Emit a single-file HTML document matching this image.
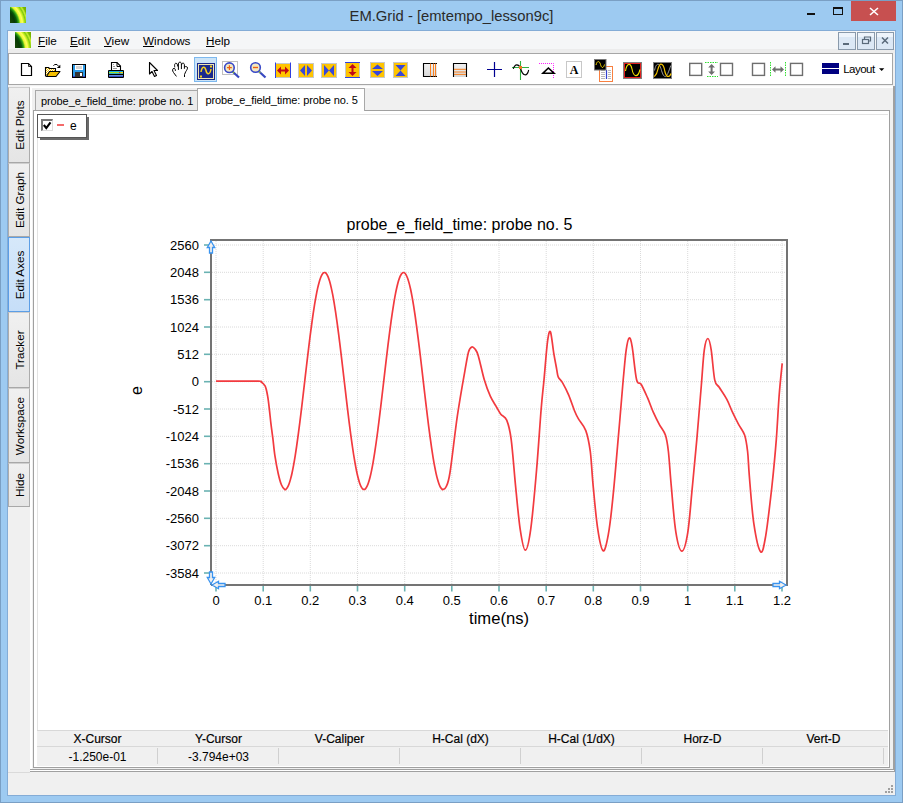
<!DOCTYPE html>
<html><head><meta charset="utf-8"><title>EM.Grid</title>
<style>
html,body{margin:0;padding:0;width:903px;height:803px;overflow:hidden;background:#9dcaf1;font-family:"Liberation Sans",sans-serif;}
.a{position:absolute;box-sizing:border-box;}
svg{position:absolute;left:0;top:0;overflow:visible;}
.g{stroke:#dadada;stroke-width:1;stroke-dasharray:1 1;fill:none;}
.t{stroke:#6ab2b2;stroke-width:1.6;fill:none;}
.f{stroke:#747474;stroke-width:2;fill:none;}
.w{stroke:#f23a3f;stroke-width:1.7;fill:none;stroke-linejoin:round;}
.lb{font-family:"Liberation Sans",sans-serif;font-size:13px;fill:#000;}
.tt{font-family:"Liberation Sans",sans-serif;font-size:16px;fill:#000;}
.m{fill:#f4f0ec;stroke:#3a94f0;stroke-width:1.3;}
.menu span{position:absolute;top:34px;font-size:11.7px;color:#000;}
.stab{position:absolute;left:8px;width:22px;background:linear-gradient(#f0f0f0,#e5e5e5);border:1px solid #acacac;border-top-color:#cfcfcf;border-bottom-color:#a8a8a8;box-sizing:border-box;}
.stab span{position:absolute;left:50%;top:50%;transform:translate(-50%,-50%) rotate(-90deg);font-size:11.7px;white-space:nowrap;color:#000;}
.hd{position:absolute;top:732px;font-size:12px;color:#000;text-align:center;width:121px;-webkit-text-stroke:0.2px #000;}
.vl{position:absolute;top:750px;font-size:12px;color:#000;text-align:center;width:121px;}
</style></head><body>
<!-- outer frame -->
<div class="a" style="left:0;top:0;width:903px;height:803px;border:1px solid #7a9fc4;"></div>
<!-- title icon -->
<div class="a" style="left:10px;top:7px;width:16px;height:16px;background:radial-gradient(circle at -13px 18px,#4a5a18 0px,#1a4a08 13px,#083a06 18px,#0a5a08 20px,#40b018 22px,#e8f830 23.5px,#ffff60 25.5px,#c8f020 27px,#80c810 28.5px,#c8f030 30px,#78b800 31.5px,#6a9a00 40px);"></div>
<div class="a" style="left:0;top:1px;width:903px;height:30px;text-align:center;font-size:14.8px;line-height:30px;color:#2a2a2a;">EM.Grid - [emtempo_lesson9c]</div>
<!-- title buttons -->
<div class="a" style="left:807px;top:13px;width:8px;height:2px;background:#111;"></div>
<div class="a" style="left:833px;top:7px;width:10px;height:8px;border:1px solid #111;border-top-width:2px;"></div>
<div class="a" style="left:851px;top:1px;width:45px;height:20px;background:#c75050;"></div>
<svg width="903" height="30" style="pointer-events:none"><path d="M870 8 L878 15 M878 8 L870 15" stroke="#fff" stroke-width="1.6"/></svg>

<!-- client area -->
<div class="a" style="left:7px;top:30px;width:889px;height:766px;border:1px solid #84acd6;"></div>
<div class="a" style="left:8px;top:31px;width:887px;height:764px;background:#f0f0f0;"></div>
<!-- menu bar -->
<div class="a" style="left:8px;top:31px;width:887px;height:18px;background:#f5f6f7;"></div>
<div class="a" style="left:15px;top:32px;width:16px;height:16px;background:radial-gradient(circle at -13px 18px,#4a5a18 0px,#1a4a08 13px,#083a06 18px,#0a5a08 20px,#40b018 22px,#e8f830 23.5px,#ffff60 25.5px,#c8f020 27px,#80c810 28.5px,#c8f030 30px,#78b800 31.5px,#6a9a00 40px);"></div>
<div class="menu">
<span style="left:38px"><u>F</u>ile</span>
<span style="left:70px"><u>E</u>dit</span>
<span style="left:104px"><u>V</u>iew</span>
<span style="left:143px"><u>W</u>indows</span>
<span style="left:206px"><u>H</u>elp</span>
</div>
<!-- band -->
<div class="a" style="left:8px;top:49px;width:887px;height:4px;background:#ececec;"></div>
<!-- mdi buttons -->
<div class="a" style="left:838px;top:32px;width:18px;height:18px;border:1px solid #8a9aab;background:linear-gradient(#eef4fb 0,#eef4fb 25%,#dce8f5 25%,#dce8f5 100%);"></div>
<div class="a" style="left:857px;top:32px;width:18px;height:18px;border:1px solid #8a9aab;background:linear-gradient(#eef4fb 0,#eef4fb 25%,#dce8f5 25%,#dce8f5 100%);"></div>
<div class="a" style="left:876px;top:32px;width:18px;height:18px;border:1px solid #8a9aab;background:linear-gradient(#eef4fb 0,#eef4fb 25%,#dce8f5 25%,#dce8f5 100%);"></div>
<svg width="903" height="60" style="pointer-events:none">
<rect x="843" y="43" width="6" height="2" fill="#5a6a7a"/>
<rect x="862.5" y="39.5" width="6" height="4" fill="none" stroke="#5a6a7a" stroke-width="1.2"/>
<path d="M864.5 39.5 V37 H870.5 V41 H868.5" fill="none" stroke="#5a6a7a" stroke-width="1.2"/>
<path d="M882 37.5 L888 43.5 M888 37.5 L882 43.5" stroke="#5a6a7a" stroke-width="1.5"/>
</svg>

<!-- toolbar -->
<div class="a" style="left:8px;top:53px;width:885px;height:32px;background:#fff;border:1px solid #a6a6a6;"></div>
<svg width="903" height="90" style="pointer-events:none">
<!-- new doc -->
<path d="M21.5 63.5 H28.5 L31.5 66.5 V75.5 H21.5 Z" fill="#fff" stroke="#000" stroke-width="1.2"/>
<path d="M28.5 63.5 V66.5 H31.5" fill="none" stroke="#000" stroke-width="0.8"/>
<!-- open folder -->
<defs><pattern id="chk" x="0" y="0" width="2" height="2" patternUnits="userSpaceOnUse"><rect width="2" height="2" fill="#fff"/><rect width="1" height="1" fill="#f5c000"/><rect x="1" y="1" width="1" height="1" fill="#f5c000"/></pattern></defs>
<path d="M46 68 H49 L50 69 H55 V72 H49 L47 76 H46 Z" fill="url(#chk)"/>
<path d="M45.5 76.5 V67.5 H48.5 L49.5 68.5 H55.5 V71.5 H59.5" stroke="#000" stroke-width="1.1" fill="none"/>
<path d="M49.5 71.5 H60 L56 76.5 H46.5 Z" fill="#f5c000" stroke="#000" stroke-width="1.1" stroke-linejoin="round"/>
<path d="M53.5 65.8 L54.6 64.5 H57 L58.5 66.2" stroke="#000" stroke-width="1" fill="none"/>
<path d="M56.8 67.9 L60.3 67.9 L60.3 64.8 Z" fill="#000"/>
<!-- save -->
<rect x="72" y="64" width="14" height="14" fill="#000"/>
<rect x="73" y="65" width="12" height="12" fill="#2a9ae8"/>
<rect x="73" y="76" width="12" height="1" fill="#3a3ad0"/>
<rect x="75" y="65" width="8" height="5" fill="#fff"/>
<rect x="76" y="66" width="6" height="3" fill="#d4d4d4"/>
<rect x="75" y="72" width="8" height="5" fill="#333"/>
<rect x="80" y="73" width="2" height="3" fill="#fff"/>
<!-- printer -->
<defs><linearGradient id="pb" x1="0" y1="0" x2="0" y2="1"><stop offset="0" stop-color="#78a8ec"/><stop offset="1" stop-color="#2030b0"/></linearGradient></defs>
<path d="M111.5 62.5 H117 L120.5 66 V70.5 H111.5 Z" fill="#fff" stroke="#000" stroke-width="1.1"/>
<path d="M117 62.5 V66.5 H120.5" fill="none" stroke="#000" stroke-width="1"/>
<rect x="113" y="64" width="1" height="1" fill="#999"/>
<rect x="113" y="66" width="2" height="1" fill="#999"/>
<rect x="113" y="68" width="4" height="1" fill="#999"/>
<rect x="108" y="70" width="16" height="8" rx="1" fill="#000"/>
<rect x="109" y="71" width="14" height="3" fill="#10a8ec"/>
<rect x="109" y="72" width="14" height="1.2" fill="#a8e020"/>
<rect x="119" y="72" width="1.5" height="1.2" fill="#f02030"/>
<rect x="120.5" y="72" width="2.5" height="1.2" fill="#f8d800"/>
<rect x="109" y="75" width="14" height="2" fill="url(#pb)"/>
<!-- pointer -->
<path d="M149.5 62.5 V74 L152 71.5 L154.5 76.5 L156.5 75.5 L154 70.5 H157.5 Z" fill="#fff" stroke="#000" stroke-width="1.1" stroke-linejoin="round"/>
<!-- hand -->
<g fill="none" stroke="#000" stroke-width="1" stroke-linecap="round">
<path d="M176.2 76.1 L173.5 72.5 C172 70.5 172.4 68.4 174 68.4 C175 68.4 175.4 69.2 175.4 70.5"/>
<path d="M174.7 67 C174.2 64 175 63.3 176 63.3 C177.3 63.3 177.5 64.5 177.5 66"/>
<path d="M178.4 69.5 V64 C178.4 62.6 179.2 62.2 180 62.2 C180.9 62.2 181.4 63 181.4 64 V68.7"/>
<path d="M181.6 64.5 C181.6 63.5 182.3 63.2 183 63.2 C183.9 63.2 184.4 63.8 184.4 64.8 V68.4"/>
<path d="M184.6 66.8 C185.5 66.3 187.5 66.3 187.5 68 C187.5 69 186.5 70.5 185.8 71.5 L184.5 74.5 V76.6"/>
</g>
<!-- selected waveform button -->
<rect x="194.5" y="57.5" width="22" height="24" fill="#cce4f7" stroke="#7db8ee" stroke-width="1"/>
<rect x="197" y="63" width="18" height="17" fill="#1a2a8e"/>
<rect x="198.5" y="64.5" width="15" height="14" fill="none" stroke="#f0e6b0" stroke-width="1"/>
<path d="M201 72 C202 66 205 66 206 70.5 C207 75 210 75 211 69" fill="none" stroke="#f5d020" stroke-width="1.5"/>
<rect x="210" y="65.5" width="2" height="2" fill="#f5d020"/>
<rect x="200" y="75.5" width="2" height="2" fill="#f5d020"/>
<!-- zoom in -->
<rect x="222.5" y="61.5" width="15" height="13" fill="none" stroke="#c0c0c0" stroke-width="1"/>
<path d="M232.5 71.5 L239 77.5" stroke="#3848c0" stroke-width="2.2"/>
<path d="M232.5 71.5 L234 73" stroke="#90c030" stroke-width="1.5"/>
<circle cx="229.4" cy="67.7" r="4.8" fill="#f2e8c0" stroke="#3848c8" stroke-width="1.6"/>
<path d="M227 67.7 H231.8 M229.4 65.3 V70.1" stroke="#f06010" stroke-width="1.2"/>
<!-- zoom out -->
<path d="M258.8 71.3 L265.5 77.5" stroke="#3848c0" stroke-width="2.2"/>
<path d="M258.8 71.3 L260.3 72.8" stroke="#90c030" stroke-width="1.5"/>
<circle cx="255.5" cy="67.5" r="4.8" fill="#f2e8c0" stroke="#3848c8" stroke-width="1.6"/>
<path d="M253 67.5 H258" stroke="#f06010" stroke-width="1.4"/>
<!-- A: red horiz arrows -->
<rect x="275" y="63" width="16" height="15" fill="#ffc400"/>
<path d="M275.5 63.5 H290.5 M275.5 77.5 H290.5" stroke="#c8c8c8" stroke-width="1"/>
<path d="M275.5 62.5 V78 M290.5 62.5 V78" stroke="#3040e0" stroke-width="1"/>
<path d="M277 70.5 L281 66.5 V69.5 H285 V66.5 L289 70.5 L285 74.5 V71.5 H281 V74.5 Z" fill="#c00818"/>
<!-- B -->
<rect x="298.5" y="63.5" width="15" height="14" fill="#ffc400" stroke="#c8c8c8" stroke-width="1"/>
<path d="M300 70.5 L305 65 V76 Z M312 70.5 L307 65 V76 Z" fill="#3848d8"/>
<!-- C -->
<rect x="321.5" y="63.5" width="15" height="14" fill="#ffc400" stroke="#c8c8c8" stroke-width="1"/>
<path d="M324 65 L329 70.5 L324 76 Z M334 65 L329 70.5 L334 76 Z" fill="#3848d8"/>
<!-- D: red vert arrows -->
<rect x="345" y="62" width="15" height="16" fill="#ffc400"/>
<path d="M345.5 62.5 V77.5 M359.5 62.5 V77.5" stroke="#c8c8c8" stroke-width="1"/>
<path d="M345 62.5 H360 M345 77.5 H360" stroke="#3040e0" stroke-width="1"/>
<path d="M352.5 64 L356.5 68 H353.5 V72 H356.5 L352.5 76 L348.5 72 H351.5 V68 H348.5 Z" fill="#c00818"/>
<!-- E -->
<rect x="370.5" y="62.5" width="14" height="15" fill="#ffc400" stroke="#c8c8c8" stroke-width="1"/>
<path d="M377.5 64.5 L383 69 H372 Z M377.5 76 L383 71 H372 Z" fill="#3848d8"/>
<!-- F -->
<rect x="393.5" y="62.5" width="14" height="15" fill="#ffc400" stroke="#c8c8c8" stroke-width="1"/>
<path d="M395.5 65 H405.5 L400.5 70.5 Z M395.5 76 H405.5 L400.5 70.5 Z" fill="#3848d8"/>
<!-- vertical bars -->
<defs><linearGradient id="gg" x1="0" y1="0" x2="0" y2="1"><stop offset="0" stop-color="#f2f2f2"/><stop offset="0.5" stop-color="#e6e6e6"/><stop offset="1" stop-color="#d6d6d6"/></linearGradient></defs>
<rect x="423" y="63" width="14" height="14" fill="url(#gg)"/>
<path d="M437 63.5 H423.5 V76.5 H437" fill="none" stroke="#000" stroke-width="1.1"/>
<path d="M430.5 63.5 V76.5 M433.5 63.5 V76.5 M435.5 63.5 V76.5" stroke="#f88020" stroke-width="1"/>
<!-- horizontal bars -->
<rect x="453" y="63" width="14" height="14" fill="url(#gg)"/>
<path d="M453.5 77 V63.5 H466.5 V77" fill="none" stroke="#000" stroke-width="1.1"/>
<path d="M454 69.3 H466 M454 72 H466 M454 74.4 H466" stroke="#f88020" stroke-width="1"/>
<!-- plus -->
<path d="M487 69.5 H502 M494.5 62 V77" stroke="#000090" stroke-width="1.2"/>
<!-- sine cursor -->
<path d="M520.5 61 V80 M512 67.5 H529" stroke="#30b040" stroke-width="1.1"/>
<path d="M513.3 68.8 C515 63.5 518.5 63.8 520.5 68 C522.5 76.5 527 77 528.7 70" fill="none" stroke="#000" stroke-width="1.1"/>
<rect x="519" y="66" width="3" height="3" fill="#f07820"/>
<!-- triangle magenta -->
<path d="M539 63.5 H553.5 V78" fill="none" stroke="#ff20ff" stroke-width="1" stroke-dasharray="1 1"/>
<path d="M543 73.2 L548.4 68 L554 73.2 Z" fill="none" stroke="#000" stroke-width="1.6"/>
<!-- A box -->
<rect x="566.5" y="61.5" width="15" height="16" fill="#fff" stroke="#c8c8c8" stroke-width="1"/>
<text x="574" y="74" text-anchor="middle" font-family="Liberation Serif" font-weight="bold" font-size="12" fill="#000">A</text>
<!-- overlay -->
<rect x="599.5" y="66.5" width="13" height="15" fill="#fff" stroke="#f88040" stroke-width="1"/>
<path d="M601 70.5 H605 M601 72.5 H605 M601 74.5 H605 M601 76.5 H605 M601 78.5 H605 M608 70.5 H611 M608 72.5 H611 M608 74.5 H611 M608 76.5 H611 M608 78.5 H611" stroke="#b8b8b8" stroke-width="1"/>
<path d="M606.5 70 V79" stroke="#3040d0" stroke-width="1.2"/>
<rect x="594.5" y="59.5" width="11.5" height="10.5" fill="#000" stroke="#777" stroke-width="1"/>
<path d="M596 65 C597 60.5 599.5 60.5 600.5 64.5 C601.5 68.5 603.5 68.5 604.5 64.5" fill="none" stroke="#f0d000" stroke-width="1"/>
<!-- red sine -->
<rect x="623.5" y="62.5" width="18" height="16" fill="#000" stroke="#808080" stroke-width="1"/>
<rect x="624.5" y="63.5" width="16" height="14" fill="none" stroke="#e02020" stroke-width="1"/>
<path d="M625.5 71 C627 62.5 630.5 62.5 632 69 C633.5 77.5 638 78 640 69.5" fill="none" stroke="#f0e000" stroke-width="1.1"/>
<!-- double sine -->
<rect x="653.5" y="62.5" width="18" height="16" fill="#000" stroke="#808080" stroke-width="1"/>
<path d="M654.5 70.5 C655.5 66 656.5 64.3 658 64.3 C660 64.3 661 69 662 72 C663 75 664 76.5 665.2 76.5 C667 76.5 668.5 72 670.8 65.5" fill="none" stroke="#9a9a9a" stroke-width="1"/>
<path d="M654.3 76.6 C656 75 657.3 73 658 69 C659 65.5 660 64.2 661 64.2 C662.5 64.2 664 66 665 72 C666 75.5 667 76.5 668 76.5 C669.5 76.5 670.5 75 671 73.5" fill="none" stroke="#f5c400" stroke-width="1.2"/>
<!-- squares and arrows -->
<g fill="none" stroke="#6e6e6e" stroke-width="1.4">
<rect x="689.7" y="63.4" width="12" height="12"/>
<rect x="720.5" y="63.4" width="12" height="12"/>
<rect x="752.5" y="63.4" width="12" height="12"/>
<rect x="790.5" y="63.4" width="12" height="12"/>
</g>
<path d="M705 62.5 H718 M707 76.5 H718" stroke="#30e030" stroke-width="1" stroke-dasharray="1.5 1"/>
<path d="M711.6 64 L715 67.5 H712.6 V71.5 H715 L711.6 75 L708.2 71.5 H710.6 V67.5 H708.2 Z" fill="#6e6e6e"/>
<path d="M770.5 62 V76 M785.5 62 V76" stroke="#30e030" stroke-width="1" stroke-dasharray="1.5 1"/>
<path d="M772 69.5 L775.5 66.2 V68.5 H780.5 V66.2 L784 69.5 L780.5 72.8 V70.5 H775.5 V72.8 Z" fill="#6e6e6e"/>
<!-- layout -->
<rect x="822" y="63" width="17" height="5" fill="#000080"/>
<rect x="822" y="69" width="17" height="5" fill="#000080"/>
<text x="843.2" y="72.7" font-family="Liberation Sans" font-size="11.5" letter-spacing="-0.5" fill="#000">Layout</text>
<path d="M879 68.3 H884.3 L881.65 71 Z" fill="#000"/>
</svg>


<!-- mdi client -->
<div class="a" style="left:30px;top:86px;width:865px;height:686px;background:#fff;border-right:1px solid #a0a0a0;border-bottom:1px solid #a0a0a0;"></div>
<div class="a" style="left:30px;top:86px;width:864px;height:684px;border-right:1px solid #a0a0a0;border-bottom:1px solid #a0a0a0;"></div>
<div class="a" style="left:32px;top:88px;width:861px;height:681px;background:#f0f0f0;"></div>
<div class="a" style="left:30px;top:769px;width:863px;height:1px;background:#a0a0a0;"></div>
<div class="a" style="left:30px;top:86px;width:863px;height:1px;background:#fcfcfc;"></div>

<!-- side tabs -->
<div class="stab" style="top:87px;height:76px;"><span>Edit Plots</span></div>
<div class="stab" style="top:163px;height:74px;"><span>Edit Graph</span></div>
<div class="stab" style="top:237px;height:75px;background:linear-gradient(#d6e8fa,#c6def8);border-color:#5c9ee6;"><span>Edit Axes</span></div>
<div class="stab" style="top:312px;height:76px;"><span>Tracker</span></div>
<div class="stab" style="top:388px;height:75px;"><span>Workspace</span></div>
<div class="stab" style="top:463px;height:44px;"><span>Hide</span></div>

<!-- doc tabs -->
<div class="a" style="left:33px;top:110px;width:857px;height:658px;background:#fff;border:1px solid #a0a0a0;"></div>
<div class="a" style="left:37px;top:114px;width:851px;height:651px;border-top:1px solid #e3e3e3;border-left:1px solid #e3e3e3;"></div>
<div class="a" style="left:35px;top:90px;width:163px;height:20px;background:#ebebeb;border:1px solid #a8a8a8;border-bottom:none;"></div>
<div class="a" style="left:41px;top:95px;font-size:11px;letter-spacing:-0.1px;color:#000;white-space:nowrap;">probe_e_field_time: probe no. 1</div>
<div class="a" style="left:197px;top:88px;width:168px;height:23px;background:#fff;border:1px solid #a8a8a8;border-bottom:none;"></div>
<div class="a" style="left:205.5px;top:93.5px;font-size:11px;letter-spacing:-0.1px;color:#000;white-space:nowrap;">probe_e_field_time: probe no. 5</div>

<!-- legend -->
<div class="a" style="left:40px;top:117px;width:49px;height:23px;background:#6a6a6a;"></div>
<div class="a" style="left:37px;top:114px;width:50px;height:24px;background:#fff;border:1px solid #555;"></div>
<div class="a" style="left:41px;top:119px;width:12px;height:12px;background:#fff;border:2px solid #777;border-right:1px solid #ddd;border-bottom:1px solid #ddd;"></div>
<svg width="903" height="200" style="pointer-events:none"><path d="M43.8 125 L46.3 128 L50.5 122.3" stroke="#000" stroke-width="2.1" fill="none"/></svg>
<div class="a" style="left:57px;top:124px;width:7px;height:2px;background:#f46a6a;"></div>
<div class="a" style="left:70px;top:119px;font-size:12px;color:#000;">e</div>

<!-- chart -->
<svg width="903" height="803" style="pointer-events:none">
<line x1="216.0" y1="241" x2="216.0" y2="585" class="g"/>
<line x1="263.2" y1="241" x2="263.2" y2="585" class="g"/>
<line x1="310.3" y1="241" x2="310.3" y2="585" class="g"/>
<line x1="357.5" y1="241" x2="357.5" y2="585" class="g"/>
<line x1="404.7" y1="241" x2="404.7" y2="585" class="g"/>
<line x1="451.8" y1="241" x2="451.8" y2="585" class="g"/>
<line x1="499.0" y1="241" x2="499.0" y2="585" class="g"/>
<line x1="546.2" y1="241" x2="546.2" y2="585" class="g"/>
<line x1="593.3" y1="241" x2="593.3" y2="585" class="g"/>
<line x1="640.5" y1="241" x2="640.5" y2="585" class="g"/>
<line x1="687.7" y1="241" x2="687.7" y2="585" class="g"/>
<line x1="734.8" y1="241" x2="734.8" y2="585" class="g"/>
<line x1="782.0" y1="241" x2="782.0" y2="585" class="g"/>
<line x1="212" y1="245.0" x2="787" y2="245.0" class="g"/>
<line x1="212" y1="272.3" x2="787" y2="272.3" class="g"/>
<line x1="212" y1="299.7" x2="787" y2="299.7" class="g"/>
<line x1="212" y1="327.0" x2="787" y2="327.0" class="g"/>
<line x1="212" y1="354.3" x2="787" y2="354.3" class="g"/>
<line x1="212" y1="381.7" x2="787" y2="381.7" class="g"/>
<line x1="212" y1="409.0" x2="787" y2="409.0" class="g"/>
<line x1="212" y1="436.3" x2="787" y2="436.3" class="g"/>
<line x1="212" y1="463.7" x2="787" y2="463.7" class="g"/>
<line x1="212" y1="491.0" x2="787" y2="491.0" class="g"/>
<line x1="212" y1="518.3" x2="787" y2="518.3" class="g"/>
<line x1="212" y1="545.7" x2="787" y2="545.7" class="g"/>
<line x1="212" y1="573.0" x2="787" y2="573.0" class="g"/>
<line x1="216.0" y1="586" x2="216.0" y2="591.5" class="t"/>
<line x1="263.2" y1="586" x2="263.2" y2="591.5" class="t"/>
<line x1="310.3" y1="586" x2="310.3" y2="591.5" class="t"/>
<line x1="357.5" y1="586" x2="357.5" y2="591.5" class="t"/>
<line x1="404.7" y1="586" x2="404.7" y2="591.5" class="t"/>
<line x1="451.8" y1="586" x2="451.8" y2="591.5" class="t"/>
<line x1="499.0" y1="586" x2="499.0" y2="591.5" class="t"/>
<line x1="546.2" y1="586" x2="546.2" y2="591.5" class="t"/>
<line x1="593.3" y1="586" x2="593.3" y2="591.5" class="t"/>
<line x1="640.5" y1="586" x2="640.5" y2="591.5" class="t"/>
<line x1="687.7" y1="586" x2="687.7" y2="591.5" class="t"/>
<line x1="734.8" y1="586" x2="734.8" y2="591.5" class="t"/>
<line x1="782.0" y1="586" x2="782.0" y2="591.5" class="t"/>
<line x1="204" y1="245.0" x2="210" y2="245.0" class="t"/>
<line x1="204" y1="272.3" x2="210" y2="272.3" class="t"/>
<line x1="204" y1="299.7" x2="210" y2="299.7" class="t"/>
<line x1="204" y1="327.0" x2="210" y2="327.0" class="t"/>
<line x1="204" y1="354.3" x2="210" y2="354.3" class="t"/>
<line x1="204" y1="381.7" x2="210" y2="381.7" class="t"/>
<line x1="204" y1="409.0" x2="210" y2="409.0" class="t"/>
<line x1="204" y1="436.3" x2="210" y2="436.3" class="t"/>
<line x1="204" y1="463.7" x2="210" y2="463.7" class="t"/>
<line x1="204" y1="491.0" x2="210" y2="491.0" class="t"/>
<line x1="204" y1="518.3" x2="210" y2="518.3" class="t"/>
<line x1="204" y1="545.7" x2="210" y2="545.7" class="t"/>
<line x1="204" y1="573.0" x2="210" y2="573.0" class="t"/>
<path d="M211 585 V240 H787 V585 H211" class="f"/>
<path d="M216.0 381.2 C222.8 381.2 249.6 381.1 257.1 381.2 C264.6 381.3 259.9 381.2 261.2 382.0 C262.5 382.8 264.1 383.9 265.2 386.2 C266.3 388.5 266.9 392.1 267.6 395.9 C268.3 399.7 268.8 404.2 269.3 408.8 C269.9 413.4 270.3 418.5 270.9 423.4 C271.5 428.2 272.1 432.5 272.8 437.9 C273.5 443.3 274.0 449.8 274.9 455.7 C275.8 461.6 277.1 468.6 278.2 473.5 C279.3 478.4 280.3 482.1 281.4 484.8 C282.5 487.5 283.8 488.7 284.6 489.4 C285.4 490.2 285.6 489.5 286.1 489.1 C286.6 488.7 287.1 488.1 287.6 487.2 C288.1 486.3 288.6 485.2 289.1 483.8 C289.6 482.4 290.1 480.8 290.6 478.9 C291.1 477.1 291.6 475.0 292.1 472.7 C292.6 470.4 293.1 467.8 293.6 465.1 C294.1 462.4 294.6 459.4 295.1 456.3 C295.6 453.2 296.1 449.9 296.6 446.5 C297.1 443.1 297.6 439.5 298.1 435.7 C298.6 432.0 299.1 428.2 299.6 424.2 C300.1 420.3 300.6 416.2 301.1 412.1 C301.6 407.9 302.1 403.7 302.6 399.5 C303.1 395.2 303.6 390.9 304.1 386.6 C304.6 382.3 305.1 378.0 305.6 373.7 C306.1 369.4 306.6 365.1 307.1 360.8 C307.6 356.6 308.1 352.4 308.6 348.3 C309.1 344.2 309.6 340.1 310.1 336.2 C310.6 332.3 311.1 328.5 311.6 324.8 C312.1 321.1 312.6 317.5 313.1 314.1 C313.6 310.7 314.1 307.5 314.6 304.4 C315.1 301.4 315.6 298.5 316.1 295.8 C316.6 293.2 317.1 290.7 317.6 288.4 C318.1 286.2 318.6 284.1 319.1 282.4 C319.6 280.6 320.1 279.0 320.6 277.7 C321.1 276.4 321.6 275.3 322.1 274.5 C322.6 273.7 323.1 273.1 323.6 272.8 C324.1 272.5 324.6 272.4 325.1 272.6 C325.6 272.8 326.1 273.3 326.6 274.0 C327.1 274.7 327.6 275.7 328.1 276.9 C328.6 278.1 329.1 279.6 329.6 281.3 C330.1 283.0 330.6 285.0 331.1 287.1 C331.6 289.3 332.1 291.7 332.6 294.2 C333.1 296.8 333.6 299.6 334.1 302.6 C334.6 305.6 335.1 308.8 335.6 312.1 C336.1 315.4 336.6 318.9 337.1 322.6 C337.6 326.2 338.1 330.0 338.6 333.9 C339.1 337.7 339.6 341.8 340.1 345.8 C340.6 349.9 341.1 354.1 341.6 358.3 C342.1 362.5 342.6 366.8 343.1 371.1 C343.6 375.4 344.1 379.7 344.6 384.0 C345.1 388.3 345.6 392.6 346.1 396.9 C346.6 401.2 347.1 405.4 347.6 409.6 C348.1 413.7 348.6 417.8 349.1 421.8 C349.6 425.8 350.1 429.7 350.6 433.5 C351.1 437.3 351.6 440.9 352.1 444.4 C352.6 447.9 353.1 451.3 353.6 454.5 C354.1 457.6 354.6 460.6 355.1 463.4 C355.6 466.2 356.1 468.9 356.6 471.2 C357.1 473.6 357.6 475.8 358.1 477.8 C358.6 479.7 359.1 481.4 359.6 482.9 C360.1 484.4 360.6 485.6 361.1 486.6 C361.6 487.6 362.1 488.3 362.6 488.8 C363.1 489.3 363.6 489.5 364.1 489.5 C364.6 489.5 365.1 489.2 365.6 488.6 C366.1 488.1 366.6 487.3 367.1 486.2 C367.6 485.2 368.1 483.9 368.6 482.3 C369.1 480.8 369.6 479.0 370.1 477.0 C370.6 475.0 371.1 472.7 371.6 470.3 C372.1 467.8 372.6 465.2 373.1 462.3 C373.6 459.5 374.1 456.4 374.6 453.2 C375.1 450.0 375.6 446.5 376.1 443.0 C376.6 439.5 377.1 435.8 377.6 432.0 C378.1 428.2 378.6 424.2 379.1 420.2 C379.6 416.2 380.1 412.1 380.6 407.9 C381.1 403.7 381.6 399.5 382.1 395.2 C382.6 390.9 383.1 386.6 383.6 382.3 C384.1 378.0 384.6 373.7 385.1 369.4 C385.6 365.1 386.1 360.8 386.6 356.6 C387.1 352.4 387.6 348.3 388.1 344.2 C388.6 340.2 389.1 336.2 389.6 332.3 C390.1 328.5 390.6 324.7 391.1 321.1 C391.6 317.5 392.1 314.1 392.6 310.8 C393.1 307.5 393.6 304.4 394.1 301.4 C394.6 298.5 395.1 295.8 395.6 293.2 C396.1 290.7 396.6 288.4 397.1 286.3 C397.6 284.2 398.1 282.3 398.6 280.6 C399.1 279.0 399.6 277.6 400.1 276.4 C400.6 275.3 401.1 274.4 401.6 273.7 C402.1 273.1 402.6 272.7 403.1 272.6 C403.6 272.4 404.1 272.5 404.6 272.9 C405.1 273.3 405.6 273.9 406.1 274.8 C406.6 275.7 407.1 276.8 407.6 278.2 C408.1 279.6 408.6 281.2 409.1 283.1 C409.6 284.9 410.1 287.0 410.6 289.3 C411.1 291.6 411.6 294.2 412.1 296.9 C412.6 299.6 413.1 302.6 413.6 305.7 C414.1 308.8 414.6 312.1 415.1 315.5 C415.6 318.9 416.1 322.5 416.6 326.3 C417.1 330.0 417.6 333.8 418.1 337.8 C418.6 341.7 419.1 345.8 419.6 349.9 C420.1 354.1 420.6 358.3 421.1 362.5 C421.6 366.8 422.1 371.1 422.6 375.4 C423.1 379.7 423.6 384.0 424.1 388.3 C424.6 392.6 425.1 396.9 425.6 401.2 C426.1 405.4 426.6 409.6 427.1 413.7 C427.6 417.8 428.1 421.9 428.6 425.8 C429.1 429.7 429.6 433.5 430.1 437.2 C430.6 440.9 431.1 444.5 431.6 447.9 C432.1 451.3 432.6 454.5 433.1 457.6 C433.6 460.6 434.1 463.5 434.6 466.2 C435.1 468.8 435.6 471.3 436.1 473.6 C436.6 475.8 437.1 477.9 437.6 479.6 C438.1 481.4 438.6 483.0 439.1 484.3 C439.6 485.6 440.1 486.7 440.6 487.5 C441.1 488.3 441.7 488.9 442.1 489.2 C442.5 489.6 442.2 489.9 442.8 489.5 C443.4 489.1 444.8 489.8 446.0 487.0 C447.2 484.2 448.1 484.4 450.0 472.5 C451.9 460.6 454.9 432.6 457.4 415.7 C459.9 398.8 463.0 381.4 464.9 370.8 C466.8 360.2 467.4 356.0 468.5 352.0 C469.6 348.0 470.7 347.4 471.8 346.9 C472.9 346.4 473.9 347.5 475.0 349.0 C476.1 350.5 476.8 350.8 478.3 355.9 C479.9 361.0 482.3 373.1 484.3 379.8 C486.3 386.5 488.3 391.7 490.3 396.2 C492.3 400.7 494.6 403.7 496.3 406.7 C498.1 409.7 499.1 412.0 500.8 414.2 C502.5 416.4 505.0 415.9 506.7 420.1 C508.4 424.3 509.7 428.4 511.2 439.6 C512.7 450.8 514.2 472.4 515.7 487.4 C517.2 502.3 518.6 518.8 520.2 529.3 C521.8 539.8 523.5 550.2 525.3 550.2 C527.0 550.2 528.8 542.8 530.7 529.3 C532.6 515.8 534.9 489.4 536.6 469.5 C538.3 449.6 539.9 424.6 541.1 409.7 C542.3 394.8 542.9 391.3 544.0 379.8 C545.1 368.3 546.5 348.9 547.6 340.9 C548.7 332.9 549.5 330.0 550.5 332.0 C551.5 334.0 552.7 346.7 553.7 352.9 C554.7 359.1 556.0 365.3 556.7 369.3 C557.5 373.3 557.2 374.6 558.2 376.8 C559.2 379.1 560.9 379.8 562.6 382.8 C564.3 385.8 566.6 390.1 568.6 394.8 C570.6 399.5 573.0 407.0 574.6 411.0 C576.2 415.0 576.4 415.4 578.3 418.7 C580.2 422.0 583.8 425.1 585.8 430.6 C587.8 436.1 589.0 442.0 590.3 451.5 C591.5 461.0 592.0 474.4 593.3 487.4 C594.5 500.4 596.1 518.7 597.8 529.3 C599.4 539.9 601.5 549.8 603.2 550.8 C604.9 551.8 606.6 543.8 608.2 535.2 C609.8 526.6 611.1 515.3 612.7 499.4 C614.4 483.5 616.4 459.5 618.1 439.6 C619.9 419.7 621.9 394.8 623.2 379.8 C624.6 364.9 625.2 356.9 626.2 349.9 C627.2 342.9 628.2 338.4 629.2 337.9 C630.2 337.4 631.0 339.9 632.2 346.9 C633.4 353.9 635.1 373.6 636.6 379.8 C638.1 386.0 639.3 381.3 641.1 384.3 C642.9 387.3 645.4 393.0 647.5 397.7 C649.6 402.4 651.5 408.2 653.5 412.7 C655.5 417.2 657.4 420.9 659.4 424.6 C661.4 428.3 663.9 430.6 665.4 435.1 C666.9 439.6 667.4 442.8 668.4 451.5 C669.4 460.2 670.1 473.9 671.4 487.4 C672.6 500.9 674.1 521.7 675.9 532.3 C677.6 542.9 679.9 551.1 681.9 551.1 C683.9 551.1 686.1 542.9 687.8 532.3 C689.5 521.7 690.8 502.8 692.3 487.4 C693.8 471.9 695.3 456.5 696.8 439.6 C698.3 422.7 700.0 400.8 701.3 385.8 C702.5 370.9 703.2 357.8 704.3 349.9 C705.4 342.0 706.8 338.5 707.9 338.5 C709.0 338.5 710.1 343.0 711.2 349.9 C712.3 356.8 713.4 373.6 714.7 379.8 C716.0 386.0 717.2 384.1 719.2 387.3 C721.2 390.5 724.5 395.0 726.7 399.2 C729.0 403.4 730.7 408.5 732.7 412.7 C734.7 416.9 736.7 420.9 738.7 424.6 C740.7 428.3 743.1 430.6 744.6 435.1 C746.1 439.6 746.8 444.8 747.6 451.5 C748.4 458.2 748.3 463.5 749.3 475.5 C750.3 487.5 751.9 510.6 753.8 523.3 C755.7 536.0 758.7 549.8 760.7 551.8 C762.7 553.8 763.9 546.0 765.8 535.3 C767.6 524.6 770.0 503.4 771.8 487.5 C773.5 471.6 775.1 455.1 776.3 439.6 C777.5 424.2 778.2 407.5 779.2 394.8 C780.2 382.1 781.7 368.6 782.2 363.4" class="w"/>
<text x="199" y="249.5" text-anchor="end" class="lb">2560</text>
<text x="199" y="276.8" text-anchor="end" class="lb">2048</text>
<text x="199" y="304.2" text-anchor="end" class="lb">1536</text>
<text x="199" y="331.5" text-anchor="end" class="lb">1024</text>
<text x="199" y="358.8" text-anchor="end" class="lb">512</text>
<text x="199" y="386.2" text-anchor="end" class="lb">0</text>
<text x="199" y="413.5" text-anchor="end" class="lb">-512</text>
<text x="199" y="440.8" text-anchor="end" class="lb">-1024</text>
<text x="199" y="468.2" text-anchor="end" class="lb">-1536</text>
<text x="199" y="495.5" text-anchor="end" class="lb">-2048</text>
<text x="199" y="522.8" text-anchor="end" class="lb">-2560</text>
<text x="199" y="550.2" text-anchor="end" class="lb">-3072</text>
<text x="199" y="577.5" text-anchor="end" class="lb">-3584</text>
<text x="216.0" y="605" text-anchor="middle" class="lb">0</text>
<text x="263.2" y="605" text-anchor="middle" class="lb">0.1</text>
<text x="310.3" y="605" text-anchor="middle" class="lb">0.2</text>
<text x="357.5" y="605" text-anchor="middle" class="lb">0.3</text>
<text x="404.7" y="605" text-anchor="middle" class="lb">0.4</text>
<text x="451.8" y="605" text-anchor="middle" class="lb">0.5</text>
<text x="499.0" y="605" text-anchor="middle" class="lb">0.6</text>
<text x="546.2" y="605" text-anchor="middle" class="lb">0.7</text>
<text x="593.3" y="605" text-anchor="middle" class="lb">0.8</text>
<text x="640.5" y="605" text-anchor="middle" class="lb">0.9</text>
<text x="687.7" y="605" text-anchor="middle" class="lb">1</text>
<text x="734.8" y="605" text-anchor="middle" class="lb">1.1</text>
<text x="782.0" y="605" text-anchor="middle" class="lb">1.2</text>
<text x="459.5" y="230" text-anchor="middle" class="tt">probe_e_field_time: probe no. 5</text>
<text x="499" y="624" text-anchor="middle" class="tt" style="font-size:16.6px">time(ns)</text>
<text x="142" y="390.5" text-anchor="middle" class="tt" transform="rotate(-90 142 390.5)">e</text>
<path d="M211 241 L207.3 247.5 L209.5 247.5 L209.5 253 L212.5 253 L212.5 247.5 L214.7 247.5 Z" class="m"/>
<path d="M211 584 L207.3 577.5 L209.5 577.5 L209.5 572 L212.5 572 L212.5 577.5 L214.7 577.5 Z" class="m"/>
<path d="M212 585 L218.5 581.3 L218.5 583.5 L225 583.5 L225 586.5 L218.5 586.5 L218.5 588.7 Z" class="m"/>
<path d="M786 585 L779.5 581.3 L779.5 583.5 L773 583.5 L773 586.5 L779.5 586.5 L779.5 588.7 Z" class="m"/>
</svg>

<!-- status table -->
<div class="a" style="left:37px;top:730px;width:851px;height:36px;background:#f0f0f0;border-top:1px solid #d8d8d8;"></div>
<div class="a" style="left:37px;top:746px;width:851px;height:1px;background:#d8d8d8;"></div>
<div class="a" style="left:157px;top:748px;width:1px;height:16px;background:#d0d0d0;"></div>
<div class="a" style="left:278px;top:748px;width:1px;height:16px;background:#d0d0d0;"></div>
<div class="a" style="left:399px;top:748px;width:1px;height:16px;background:#d0d0d0;"></div>
<div class="a" style="left:520px;top:748px;width:1px;height:16px;background:#d0d0d0;"></div>
<div class="a" style="left:641px;top:748px;width:1px;height:16px;background:#d0d0d0;"></div>
<div class="a" style="left:762px;top:748px;width:1px;height:16px;background:#d0d0d0;"></div>
<div class="a" style="left:883px;top:748px;width:1px;height:16px;background:#d0d0d0;"></div>
<div class="hd" style="left:37px">X-Cursor</div>
<div class="hd" style="left:158px">Y-Cursor</div>
<div class="hd" style="left:279px">V-Caliper</div>
<div class="hd" style="left:400px">H-Cal (dX)</div>
<div class="hd" style="left:521px">H-Cal (1/dX)</div>
<div class="hd" style="left:642px">Horz-D</div>
<div class="hd" style="left:763px">Vert-D</div>
<div class="vl" style="left:37px">-1.250e-01</div>
<div class="vl" style="left:158px">-3.794e+03</div>

<div class="a" style="left:8px;top:772px;width:22px;height:1px;background:#dadada;"></div>
<!-- status bar grip -->
<svg width="903" height="803" style="pointer-events:none">
<g fill="#a0a0a0"><rect x="891" y="785" width="2" height="2"/><rect x="888" y="788" width="2" height="2"/><rect x="891" y="788" width="2" height="2"/><rect x="885" y="791" width="2" height="2"/><rect x="888" y="791" width="2" height="2"/><rect x="891" y="791" width="2" height="2"/></g>
</svg>
</body></html>
